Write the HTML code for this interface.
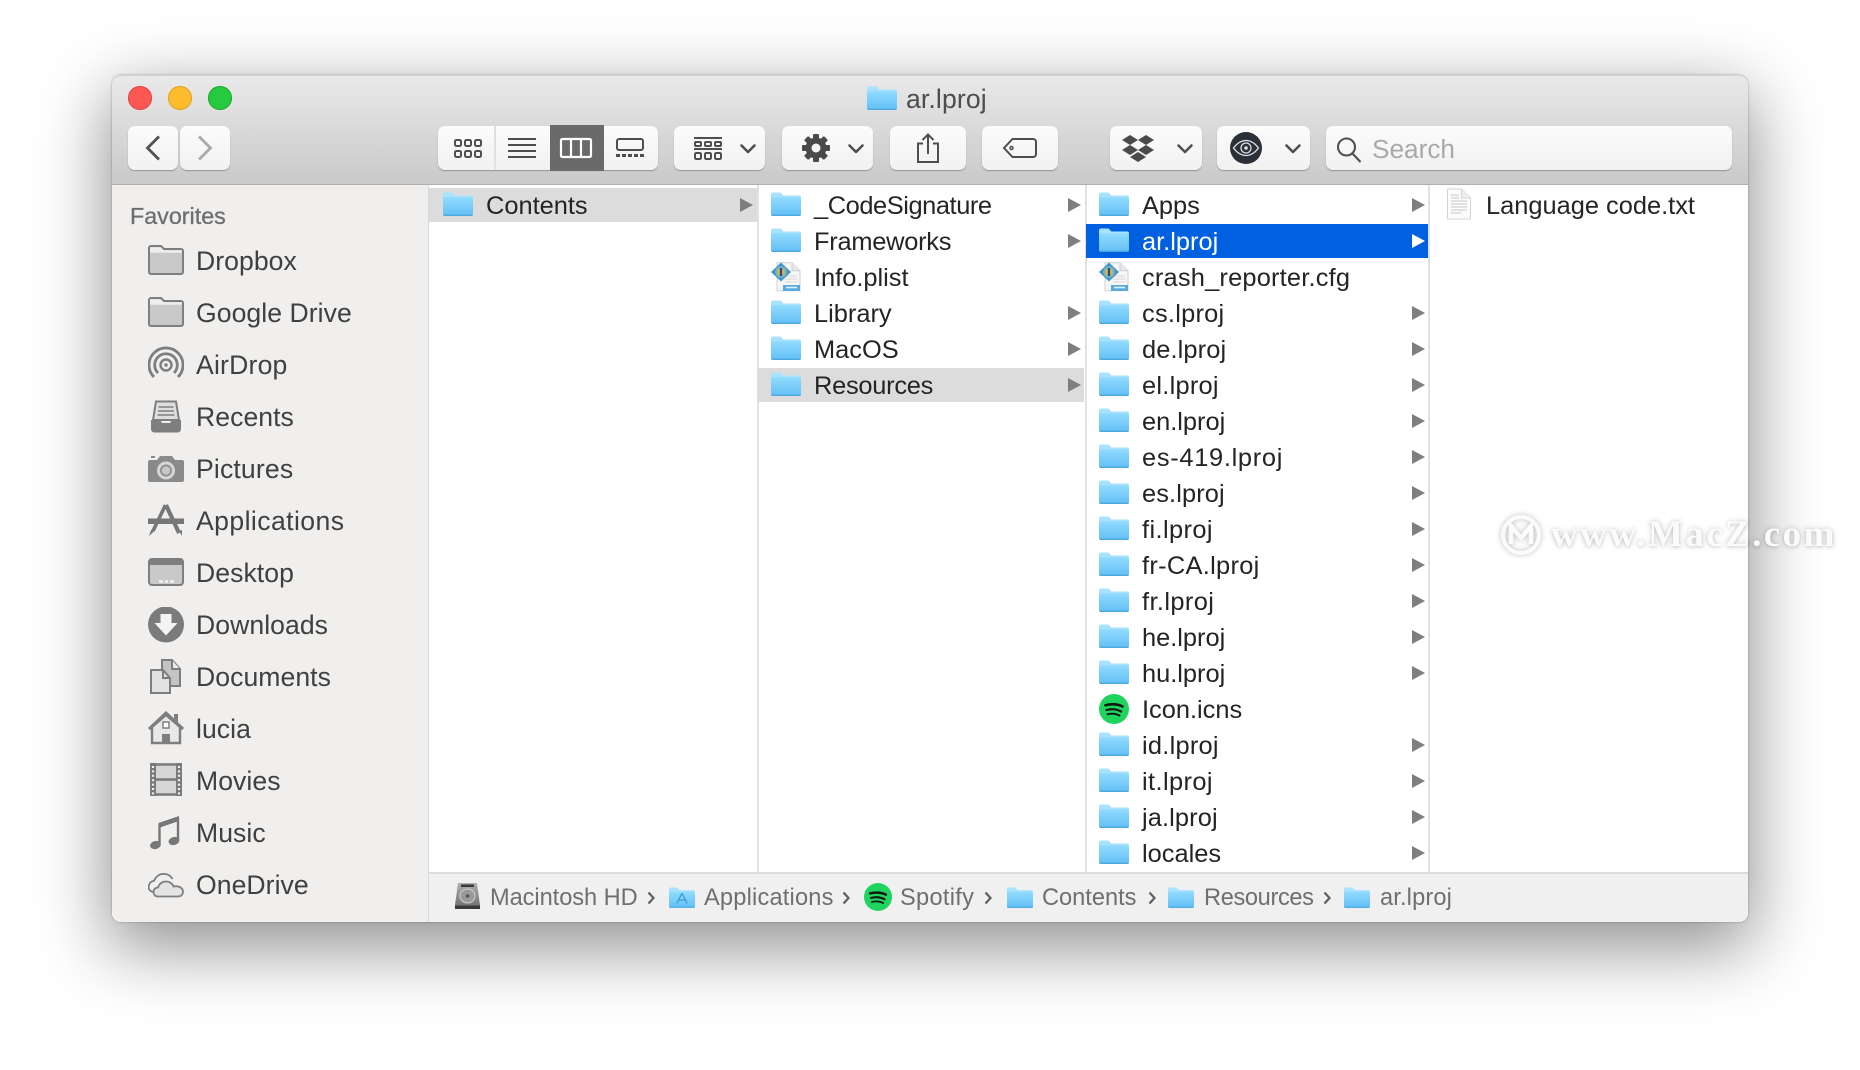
<!DOCTYPE html>
<html lang="en">
<head>
<meta charset="utf-8">
<title>ar.lproj</title>
<style>
html,body{margin:0;padding:0;background:#fff;width:1860px;height:1070px;overflow:hidden}
*{box-sizing:border-box}
body{font-family:"Liberation Sans",sans-serif;position:relative}
.win{position:absolute;left:112px;top:75px;width:1636px;height:847px;border-radius:9px;box-shadow:0 22px 70px 4px rgba(0,0,0,.44),0 0 2px rgba(0,0,0,.3)}
.abs,.a{position:absolute}
.bar{position:absolute;left:112px;top:75px;width:1636px;height:110px;border-radius:9px 9px 0 0;background:linear-gradient(#e9e9e9,#c9c9c9);border-top:1px solid #d2d2d2;border-bottom:1px solid #b0b0b0}
.main{position:absolute;left:112px;top:185px;width:1636px;height:737px;background:#fff;border-radius:0 0 9px 9px;overflow:hidden}
.side{position:absolute;left:0;top:0;width:317px;height:737px;background:#f0efee;border-right:1px solid #dadada}
.light{position:absolute;width:24px;height:24px;border-radius:50%;top:86px}
.btn{position:absolute;top:126px;height:44px;border-radius:7px;background:linear-gradient(#fcfcfc,#f1f1f1);box-shadow:0 1px 1px rgba(0,0,0,.28)}
.sel{position:absolute;left:550px;top:125px;width:54px;height:46px;background:#6a6a6a}
.s{position:absolute;left:196px;height:52px;line-height:52px;font-size:26.6px;letter-spacing:.05px;color:#404040;white-space:nowrap}
.si{position:absolute;left:148px;width:36px;height:36px}
.col{position:absolute;top:187px}
.row{position:relative;height:36px}
.row b{font-weight:400;position:absolute;top:1px;line-height:36px;font-size:25.4px;color:#242424;white-space:nowrap}
.row svg{position:absolute;top:5px}
.row i{position:absolute;top:10.5px;width:0;height:0;border-left:13px solid #7e7e7e;border-top:7.5px solid transparent;border-bottom:7.5px solid transparent}
.row.g::before,.row.b::before{content:"";position:absolute;left:0;right:0;top:1px;height:34px;background:#dcdcdc}
.row.b::before{background:#0060df}
.row.b b{color:#fff}.row.b i{border-left-color:#fff}
.c1 .row svg{left:14px}.c1 b{left:57px}.c1 i{left:311px}
.c2 .row svg{left:14px}.c2 b{left:57px}.c2 i{left:311px}
.c3 .row svg{left:13px}.c3 b{left:56px}.c3 i{left:326px}
.dv{position:absolute;top:185px;width:2px;height:688px;background:#e2e2e2}
.path{position:absolute;left:429px;top:872px;width:1319px;height:50px;background:#f0f0f0;border-top:2px solid #dcdcdc;border-radius:0 0 9px 0}
.p{position:absolute;top:874px;height:48px;line-height:48px;font-size:23.6px;color:#6f6f6f;white-space:nowrap}
.chev{position:absolute;top:891px}
.wm{position:absolute;left:1551px;top:512px;font:700 37px/46px "Liberation Serif",serif;letter-spacing:2.4px;color:#fbfbfb;text-shadow:0 0 6px rgba(0,0,0,.22),0 1px 3px rgba(0,0,0,.1);white-space:nowrap}
</style>
</head>
<body>
<svg width="0" height="0" style="position:absolute">
<defs>
<linearGradient id="fg" x1="0" y1="0" x2="0" y2="1"><stop offset="0" stop-color="#91dbfe"/><stop offset="1" stop-color="#63c0f7"/></linearGradient>
<symbol id="folder" viewBox="0 0 30 24">
<path d="M0 2.5A2 2 0 0 1 2 .5h7.5l3 3H28a2 2 0 0 1 2 2V8H0z" fill="#a9e2fd"/>
<path d="M0 5.2h30v16.6a2 2 0 0 1-2 2H2a2 2 0 0 1-2-2z" fill="url(#fg)"/>
<path d="M0 22.6h30v.2a1.6 1.6 0 0 1-1.6 1.2H1.6A1.6 1.6 0 0 1 0 22.8z" fill="#4da6de"/>
</symbol>
<symbol id="plist" viewBox="0 0 30 30">
<path d="M6 .8h15l8 8v20H6z" fill="#f6f6f6" stroke="#cfcfcf"/>
<path d="M21 .8v8h8" fill="#e6e6e6" stroke="#cfcfcf"/>
<path d="M14 14h12M14 17h12M14 20h12" stroke="#d5d5d5"/>
<path d="M10 .5l10 9.500-10 9.500-10-9.500z" fill="#3f95cf"/>
<circle cx="10" cy="10" r="5.800" fill="#7fb3b5"/>
<circle cx="10" cy="10" r="3.600" fill="#d9b24a"/>
<path d="M10 6v8" stroke="#1f4f8c" stroke-width="2.200"/>
<path d="M12 23h17v6H12z" fill="#5aaade"/>
<path d="M15 25.500h11" stroke="#dff0fb" stroke-width="1.600"/>
</symbol>
<symbol id="spot" viewBox="0 0 30 30">
<circle cx="15" cy="15" r="15" fill="#1ed45f"/>
<g fill="none" stroke="#101510" stroke-linecap="round">
<path d="M6.5 11.2c5.5-1.6 12.4-1.2 17 1.3" stroke-width="2.6"/>
<path d="M7.5 16c4.8-1.3 10.4-.8 14.6 1.5" stroke-width="2.2"/>
<path d="M8.5 20.3c4-1 8.6-.6 12 1.3" stroke-width="1.9"/>
</g>
</symbol>
<symbol id="sf" viewBox="0 0 36 36">
<path d="M1 5a2 2 0 0 1 2-2h10l3 3h17a2 2 0 0 1 2 2v21a2 2 0 0 1-2 2H3a2 2 0 0 1-2-2z" fill="#c9c9c9" stroke="#7e7e7e" stroke-width="2"/>
<path d="M2 4.2h10.6l3 3H34v2.6H2z" fill="#eeeeee"/>
</symbol>
<symbol id="chevd" viewBox="0 0 16 10"><path d="M1.500 1.500L8 8l6.500-6.500" fill="none" stroke="#4e4e4e" stroke-width="2.500" stroke-linecap="round" stroke-linejoin="round"/></symbol>
<symbol id="pchev" viewBox="0 0 8 14"><path d="M1.500 1.500L6.500 7l-5 5.500" fill="none" stroke="#5f5f5f" stroke-width="2.200"/></symbol>
</defs>
</svg>

<div class="win"></div>
<div class="bar"></div>
<div class="main"><div class="side"></div></div>

<div class="light" style="left:128px;background:#fc5753;box-shadow:inset 0 0 0 1px #df4744"></div>
<div class="light" style="left:168px;background:#fdbc2c;box-shadow:inset 0 0 0 1px #dfa023"></div>
<div class="light" style="left:208px;background:#27c93f;box-shadow:inset 0 0 0 1px #1eab2e"></div>

<svg class="a" style="left:867px;top:86px" width="30" height="24"><use href="#folder"/></svg>
<div class="a" style="left:906px;top:80px;line-height:38px;font-size:26.600px;letter-spacing:.12px;color:#4d4d4d">ar.lproj</div>

<!-- toolbar -->
<div class="btn" style="left:128px;width:50px"></div>
<div class="btn" style="left:180px;width:50px"></div>
<svg class="a" style="left:144px;top:134px" width="18" height="28"><path d="M15 2.500L3.500 14 15 25.500" fill="none" stroke="#515151" stroke-width="2.800"/></svg>
<svg class="a" style="left:196px;top:134px" width="18" height="28"><path d="M3 2.500L14.500 14 3 25.500" fill="none" stroke="#a9a9a9" stroke-width="2.800"/></svg>

<div class="btn" style="left:438px;width:220px"></div>
<div class="a" style="left:494px;top:126px;width:2px;height:44px;background:#e0e0e0"></div>
<div class="sel"></div>
<svg class="a" style="left:452px;top:136px" width="32" height="24" fill="none" stroke="#4e4e4e" stroke-width="2">
<rect x="3" y="4" width="6" height="6" rx="1.500"/><rect x="13" y="4" width="6" height="6" rx="1.500"/><rect x="23" y="4" width="6" height="6" rx="1.500"/>
<rect x="3" y="15" width="6" height="6" rx="1.500"/><rect x="13" y="15" width="6" height="6" rx="1.500"/><rect x="23" y="15" width="6" height="6" rx="1.500"/>
</svg>
<svg class="a" style="left:508px;top:136px" width="28" height="24" stroke="#4e4e4e" stroke-width="2"><path d="M0 3h28M0 9h28M0 15h28M0 21h28"/></svg>
<svg class="a" style="left:559px;top:136px" width="34" height="24" fill="none" stroke="#fff" stroke-width="2.200"><rect x="2" y="3" width="30" height="18" rx="1.500"/><path d="M12 3v18M22 3v18"/></svg>
<svg class="a" style="left:615px;top:136px" width="30" height="24"><rect x="2" y="3" width="26" height="11" rx="2" fill="none" stroke="#4e4e4e" stroke-width="2"/><path d="M1 19.500h4M7 19.500h4M13 19.500h4M19 19.500h4M25 19.500h4" stroke="#4e4e4e" stroke-width="3"/></svg>

<div class="btn" style="left:674px;width:91px"></div>
<svg class="a" style="left:692px;top:136px" width="32" height="26" fill="none" stroke="#4e4e4e" stroke-width="2">
<path d="M2 2h28M2 13h28"/>
<rect x="3" y="6" width="6" height="4" rx="1"/><rect x="13" y="6" width="6" height="4" rx="1"/><rect x="23" y="6" width="6" height="4" rx="1"/>
<rect x="3" y="17" width="6" height="6" rx="1.200"/><rect x="13" y="17" width="6" height="6" rx="1.200"/><rect x="23" y="17" width="6" height="6" rx="1.200"/>
</svg>
<svg class="a" style="left:740px;top:144px" width="16" height="10"><use href="#chevd"/></svg>

<div class="btn" style="left:782px;width:91px"></div>
<svg class="a" style="left:801px;top:133px" width="30" height="30" viewBox="0 0 30 30">
<g fill="#4a4a4a"><circle cx="15" cy="15" r="10.500"/>
<rect x="12" y="1" width="6" height="28" rx="1"/>
<rect x="12" y="1" width="6" height="28" rx="1" transform="rotate(45 15 15)"/>
<rect x="12" y="1" width="6" height="28" rx="1" transform="rotate(90 15 15)"/>
<rect x="12" y="1" width="6" height="28" rx="1" transform="rotate(135 15 15)"/></g>
<circle cx="15" cy="15" r="4.500" fill="#f6f6f6"/>
</svg>
<svg class="a" style="left:848px;top:144px" width="16" height="10"><use href="#chevd"/></svg>

<div class="btn" style="left:890px;width:76px"></div>
<svg class="a" style="left:916px;top:132px" width="24" height="32" fill="none" stroke="#4e4e4e" stroke-width="2"><path d="M7 11.500H2v18.500h20V11.500h-5"/><path d="M12 22V2.500M6.500 8L12 2.500 17.500 8"/></svg>

<div class="btn" style="left:982px;width:76px"></div>
<svg class="a" style="left:1002px;top:137px" width="36" height="22" fill="none" stroke="#4e4e4e" stroke-width="2"><path d="M10.500 2H31a3 3 0 0 1 3 3v12a3 3 0 0 1-3 3H10.500L2 11z"/><circle cx="9.500" cy="11" r="1.500" stroke-width="1.500"/></svg>

<div class="btn" style="left:1110px;width:92px"></div>
<svg class="a" style="left:1122px;top:134px" width="32" height="28" viewBox="0 0 32 28" fill="#4a4a4a">
<path d="M8 1l8 5-8 5-8-5z"/><path d="M24 1l8 5-8 5-8-5z"/><path d="M8 11l8 5-8 5-8-5z"/><path d="M24 11l8 5-8 5-8-5z"/><path d="M16 18l8 5-8 5-8-5z"/>
</svg>
<svg class="a" style="left:1177px;top:144px" width="16" height="10"><use href="#chevd"/></svg>

<div class="btn" style="left:1217px;width:93px"></div>
<svg class="a" style="left:1230px;top:132px" width="32" height="32" viewBox="0 0 32 32">
<circle cx="16" cy="16" r="16" fill="#2b3038"/>
<path d="M3.500 16C8 10 12 8.500 16 8.500S24 10 28.500 16C24 22 20 23.500 16 23.500S8 22 3.500 16z" fill="none" stroke="#d9dde0" stroke-width="1.300"/>
<circle cx="16" cy="16" r="5" fill="none" stroke="#d9dde0" stroke-width="1.300"/><circle cx="16" cy="16" r="1.800" fill="#d9dde0"/>
</svg>
<svg class="a" style="left:1285px;top:144px" width="16" height="10"><use href="#chevd"/></svg>

<div class="btn" style="left:1326px;width:406px"></div>
<svg class="a" style="left:1336px;top:136px" width="26" height="27" fill="none" stroke="#505050" stroke-width="2.100"><circle cx="10.500" cy="11" r="8.500"/><path d="M16.500 17.500l8 8.500"/></svg>
<div class="a" style="left:1372px;top:130px;line-height:38px;font-size:26.200px;color:#a9a9a9">Search</div>

<!-- sidebar -->
<div class="a" style="left:130px;top:198px;line-height:36px;font-size:23.300px;color:#6e6e6e;-webkit-text-stroke:.3px #6e6e6e">Favorites</div>

<svg class="si" style="top:243px"><use href="#sf"/></svg>
<div class="s" style="top:235px">Dropbox</div>
<svg class="si" style="top:295px"><use href="#sf"/></svg>
<div class="s" style="top:287px">Google Drive</div>

<svg class="si" style="top:346px" viewBox="0 0 36 36" fill="none" stroke="#7e7e7e">
<path d="M6 31A17 17 0 1 1 30 31" stroke-width="2.800"/><path d="M10 27A11.300 11.300 0 1 1 26 27" stroke-width="2.800"/><circle cx="18" cy="19" r="5.500" stroke-width="2.400"/><circle cx="18" cy="19" r="1.800" fill="#7e7e7e" stroke="none"/>
</svg>
<div class="s" style="top:339px;letter-spacing:.2px">AirDrop</div>

<svg class="si" style="top:399px" viewBox="0 0 36 36">
<path d="M8 2.500h20L31 21H5z" fill="#dedede" stroke="#7e7e7e" stroke-width="2"/>
<path d="M10.500 8h15M10 12h16M9.500 16h17" stroke="#7e7e7e" stroke-width="1.600"/>
<path d="M3 21h9l2 3h8l2-3h9v9a3.500 3.500 0 0 1-3.500 3.500h-23A3.500 3.500 0 0 1 3 30z" fill="#7e7e7e"/>
</svg>
<div class="s" style="top:391px">Recents</div>

<svg class="si" style="top:451px" viewBox="0 0 36 36">
<path d="M2 9h7l3-4h12l3 4h7a2 2 0 0 1 2 2v18a2 2 0 0 1-2 2H2a2 2 0 0 1-2-2V11a2 2 0 0 1 2-2z" fill="#8a8a8a"/>
<rect x="3" y="5" width="4" height="2" fill="#8a8a8a"/>
<circle cx="18" cy="19.500" r="9" fill="#d6d6d6"/><circle cx="18" cy="19.500" r="6" fill="#8f8f8f"/><circle cx="18" cy="19.500" r="4.300" fill="#c7c7c7"/>
</svg>
<div class="s" style="top:443px;letter-spacing:.15px">Pictures</div>

<svg class="si" style="top:503px" viewBox="0 0 36 36">
<rect x="0" y="15.500" width="36" height="5.500" fill="#777"/>
<path d="M18 2L31 30" stroke="#777" stroke-width="4.200" fill="none"/>
<path d="M17.500 2L5 28" stroke="#777" stroke-width="3.600" fill="none"/>
<path d="M1 33l2-6 3 1.500z M34 33l-3-5 3-1z" fill="#777"/>
</svg>
<div class="s" style="top:495px;letter-spacing:.42px">Applications</div>

<svg class="si" style="top:555px" viewBox="0 0 36 36">
<rect x="1" y="4" width="34" height="26" rx="3" fill="#c9c9c9" stroke="#7e7e7e" stroke-width="2"/>
<rect x="1" y="4" width="34" height="6" fill="#7e7e7e"/>
<path d="M11 26.500h4M17 26.500h3M22 26.500h4" stroke="#f1f1f1" stroke-width="2.600"/>
</svg>
<div class="s" style="top:547px">Desktop</div>

<svg class="si" style="top:607px" viewBox="0 0 36 36">
<circle cx="18" cy="17.500" r="18" fill="#7b7b7b"/>
<path d="M12.500 7h11v9h6L18 28.500 6.500 16h6z" fill="#f4f4f4"/>
</svg>
<div class="s" style="top:599px">Downloads</div>

<svg class="si" style="top:659px" viewBox="0 0 36 36">
<path d="M14 1h10l8 9v17H14z" fill="#c4c4c4" stroke="#7e7e7e" stroke-width="2"/>
<path d="M24 1v9h8" fill="#eaeaea" stroke="#7e7e7e" stroke-width="2"/>
<path d="M3 11h12l7 8v15H3z" fill="#e2e2e2" stroke="#7e7e7e" stroke-width="2"/>
<path d="M15 11v8h7" fill="none" stroke="#7e7e7e" stroke-width="2"/>
</svg>
<div class="s" style="top:651px">Documents</div>

<svg class="si" style="top:711px" viewBox="0 0 36 36">
<path d="M4 16v16h28V16L18 4z" fill="#e8e8e8" stroke="#7e7e7e" stroke-width="2.400"/>
<path d="M1 18L18 2l17 16" fill="none" stroke="#7e7e7e" stroke-width="3"/>
<rect x="26" y="3" width="4" height="9" fill="#7e7e7e"/>
<rect x="15" y="11" width="6" height="6" fill="#fff" stroke="#7e7e7e" stroke-width="1.500"/>
<rect x="14" y="23" width="8" height="9" fill="#7e7e7e"/>
</svg>
<div class="s" style="top:703px">lucia</div>

<svg class="si" style="top:763px" viewBox="0 0 36 36">
<rect x="2" y="0" width="32" height="33" fill="#d6d6d6"/>
<path d="M2 0h6v33H2zM28 0h6v33h-6z" fill="#7a7a7a"/>
<path d="M8 1.500h20M8 16.500h20M8 31.500h20" stroke="#7a7a7a" stroke-width="2.500"/>
<path d="M5 3v29M31 3v29" stroke="#f2f2f2" stroke-width="2.200" stroke-dasharray="2 2.400"/>
</svg>
<div class="s" style="top:755px">Movies</div>

<svg class="si" style="top:815px" viewBox="0 0 36 36">
<path d="M10.500 8L31 1v5L10.500 13z" fill="#777"/>
<path d="M11.500 10v19M30 3v22" stroke="#777" stroke-width="2.400"/>
<ellipse cx="7.500" cy="30" rx="5.500" ry="4" fill="#777" transform="rotate(-15 7.500 30)"/>
<ellipse cx="26" cy="26" rx="5.500" ry="4" fill="#777" transform="rotate(-15 26 26)"/>
</svg>
<div class="s" style="top:807px">Music</div>

<svg class="si" style="top:867px" viewBox="0 0 36 36">
<path d="M5 25C1 24 0 21 1 18c1-3 3-4 5-4C8 9 12 6.500 17 7c3.500.3 6 2.300 7.500 5" fill="#efefef" stroke="#7e7e7e" stroke-width="1.800"/>
<path d="M10 29.500c-3 0-4.500-2-4.500-4.500S7.500 20.500 10 20.500c1-3.500 4-6 8-6 3.500 0 6.500 2 7.500 5 .8-.3 1.500-.3 2.500-.3 4 0 7 2.500 7 5.300 0 3-2 5-5 5z" fill="#e3e3e3" stroke="#7e7e7e" stroke-width="1.800"/>
</svg>
<div class="s" style="top:859px">OneDrive</div>

<!-- columns -->
<div class="dv" style="left:757px"></div>
<div class="dv" style="left:1085px"></div>
<div class="dv" style="left:1428px"></div>

<div class="col c1" style="left:429px;width:328px">
<div class="row g"><svg width="30" height="24"><use href="#folder"/></svg><b>Contents</b><i></i></div>
</div>

<div class="col c2" style="left:757px;width:327px">
<div class="row"><svg width="30" height="24"><use href="#folder"/></svg><b style="letter-spacing:-.42px">_CodeSignature</b><i></i></div>
<div class="row"><svg width="30" height="24"><use href="#folder"/></svg><b style="letter-spacing:-.25px">Frameworks</b><i></i></div>
<div class="row"><svg width="30" height="30" style="top:3px"><use href="#plist"/></svg><b>Info.plist</b></div>
<div class="row"><svg width="30" height="24"><use href="#folder"/></svg><b>Library</b><i></i></div>
<div class="row"><svg width="30" height="24"><use href="#folder"/></svg><b>MacOS</b><i></i></div>
<div class="row g"><svg width="30" height="24"><use href="#folder"/></svg><b style="letter-spacing:-.25px">Resources</b><i></i></div>
</div>

<div class="col c3" style="left:1086px;width:342px">
<div class="row"><svg width="30" height="24"><use href="#folder"/></svg><b>Apps</b><i></i></div>
<div class="row b"><svg width="30" height="24"><use href="#folder"/></svg><b>ar.lproj</b><i></i></div>
<div class="row"><svg width="30" height="30" style="top:3px"><use href="#plist"/></svg><b style="letter-spacing:.2px">crash_reporter.cfg</b></div>
<div class="row"><svg width="30" height="24"><use href="#folder"/></svg><b style="letter-spacing:.25px">cs.lproj</b><i></i></div>
<div class="row"><svg width="30" height="24"><use href="#folder"/></svg><b style="letter-spacing:.12px">de.lproj</b><i></i></div>
<div class="row"><svg width="30" height="24"><use href="#folder"/></svg><b style="letter-spacing:.25px">el.lproj</b><i></i></div>
<div class="row"><svg width="30" height="24"><use href="#folder"/></svg><b>en.lproj</b><i></i></div>
<div class="row"><svg width="30" height="24"><use href="#folder"/></svg><b style="letter-spacing:.7px">es-419.lproj</b><i></i></div>
<div class="row"><svg width="30" height="24"><use href="#folder"/></svg><b style="letter-spacing:.12px">es.lproj</b><i></i></div>
<div class="row"><svg width="30" height="24"><use href="#folder"/></svg><b style="letter-spacing:.4px">fi.lproj</b><i></i></div>
<div class="row"><svg width="30" height="24"><use href="#folder"/></svg><b style="letter-spacing:.3px">fr-CA.lproj</b><i></i></div>
<div class="row"><svg width="30" height="24"><use href="#folder"/></svg><b style="letter-spacing:.4px">fr.lproj</b><i></i></div>
<div class="row"><svg width="30" height="24"><use href="#folder"/></svg><b>he.lproj</b><i></i></div>
<div class="row"><svg width="30" height="24"><use href="#folder"/></svg><b>hu.lproj</b><i></i></div>
<div class="row"><svg width="30" height="30" style="top:3px"><use href="#spot"/></svg><b>Icon.icns</b></div>
<div class="row"><svg width="30" height="24"><use href="#folder"/></svg><b style="letter-spacing:.25px">id.lproj</b><i></i></div>
<div class="row"><svg width="30" height="24"><use href="#folder"/></svg><b style="letter-spacing:.4px">it.lproj</b><i></i></div>
<div class="row"><svg width="30" height="24"><use href="#folder"/></svg><b style="letter-spacing:.12px">ja.lproj</b><i></i></div>
<div class="row"><svg width="30" height="24"><use href="#folder"/></svg><b>locales</b><i></i></div>
</div>

<div class="col" style="left:1430px;width:318px">
<div class="row"><svg width="26" height="32" style="left:16px;top:1px" fill="none"><path d="M1.500 1h14l9 9v21h-23z" fill="#fbfbfb" stroke="#d4d4d4"/><path d="M15.500 1v9h9" fill="#efefef" stroke="#d4d4d4"/><path d="M5 7h8M5 10h8M5 13h16M5 16h16M5 19h16M5 22h16M5 25h10" stroke="#c9c9c9"/></svg><b style="left:56px">Language code.txt</b></div>
</div>

<!-- path bar -->
<div class="path"></div>
<svg class="a" style="left:455px;top:883px" width="25" height="26" viewBox="0 0 25 26">
<defs><linearGradient id="hd" x1="0" y1="0" x2="0" y2="1"><stop offset="0" stop-color="#b0b0b0"/><stop offset="1" stop-color="#6c6c6c"/></linearGradient></defs>
<path d="M3 0h19l3 22v2a2 2 0 0 1-2 2H2a2 2 0 0 1-2-2v-2z" fill="url(#hd)"/>
<rect x="6" y="1.500" width="13" height="2.500" fill="#3a3a3a"/>
<ellipse cx="12.500" cy="13" rx="7.500" ry="7" fill="#9a9a9a" stroke="#d0d0d0"/>
<circle cx="12.500" cy="13" r="1.800" fill="#555"/>
<rect x="0" y="22.500" width="25" height="3.500" fill="#3a3a3a"/>
</svg>
<div class="p" style="left:490px;letter-spacing:-.05px">Macintosh HD</div>
<svg class="chev" style="left:647px" width="8" height="14"><use href="#pchev"/></svg>
<svg class="a" style="left:669px;top:887px" width="26" height="21" viewBox="0 0 30 24"><use href="#folder" width="30" height="24"/><path d="M15 7l-6 12M15 7l6 12M10 15h10" stroke="#3f9bd8" stroke-width="1.500" fill="none"/></svg>
<div class="p" style="left:704px;letter-spacing:.2px">Applications</div>
<svg class="chev" style="left:842px" width="8" height="14"><use href="#pchev"/></svg>
<svg class="a" style="left:864px;top:883px" width="28" height="28"><use href="#spot"/></svg>
<div class="p" style="left:900px;letter-spacing:.3px">Spotify</div>
<svg class="chev" style="left:984px" width="8" height="14"><use href="#pchev"/></svg>
<svg class="a" style="left:1007px;top:887px" width="26" height="21"><use href="#folder"/></svg>
<div class="p" style="left:1042px">Contents</div>
<svg class="chev" style="left:1148px" width="8" height="14"><use href="#pchev"/></svg>
<svg class="a" style="left:1168px;top:887px" width="26" height="21"><use href="#folder"/></svg>
<div class="p" style="left:1204px;letter-spacing:-.35px">Resources</div>
<svg class="chev" style="left:1323px" width="8" height="14"><use href="#pchev"/></svg>
<svg class="a" style="left:1344px;top:887px" width="26" height="21"><use href="#folder"/></svg>
<div class="p" style="left:1380px;letter-spacing:.15px">ar.lproj</div>

<!-- watermark -->
<svg class="a" style="left:1497px;top:511px;filter:drop-shadow(0 0 3px rgba(0,0,0,.26))" width="48" height="48" viewBox="0 0 48 48" fill="none" stroke="#fbfbfb">
<circle cx="24" cy="24" r="18" stroke-width="4"/>
<path d="M14 33V15l10 12 10-12v18" stroke-width="4.500"/>
</svg>
<div class="wm">www.MacZ.com</div>
</body>
</html>
